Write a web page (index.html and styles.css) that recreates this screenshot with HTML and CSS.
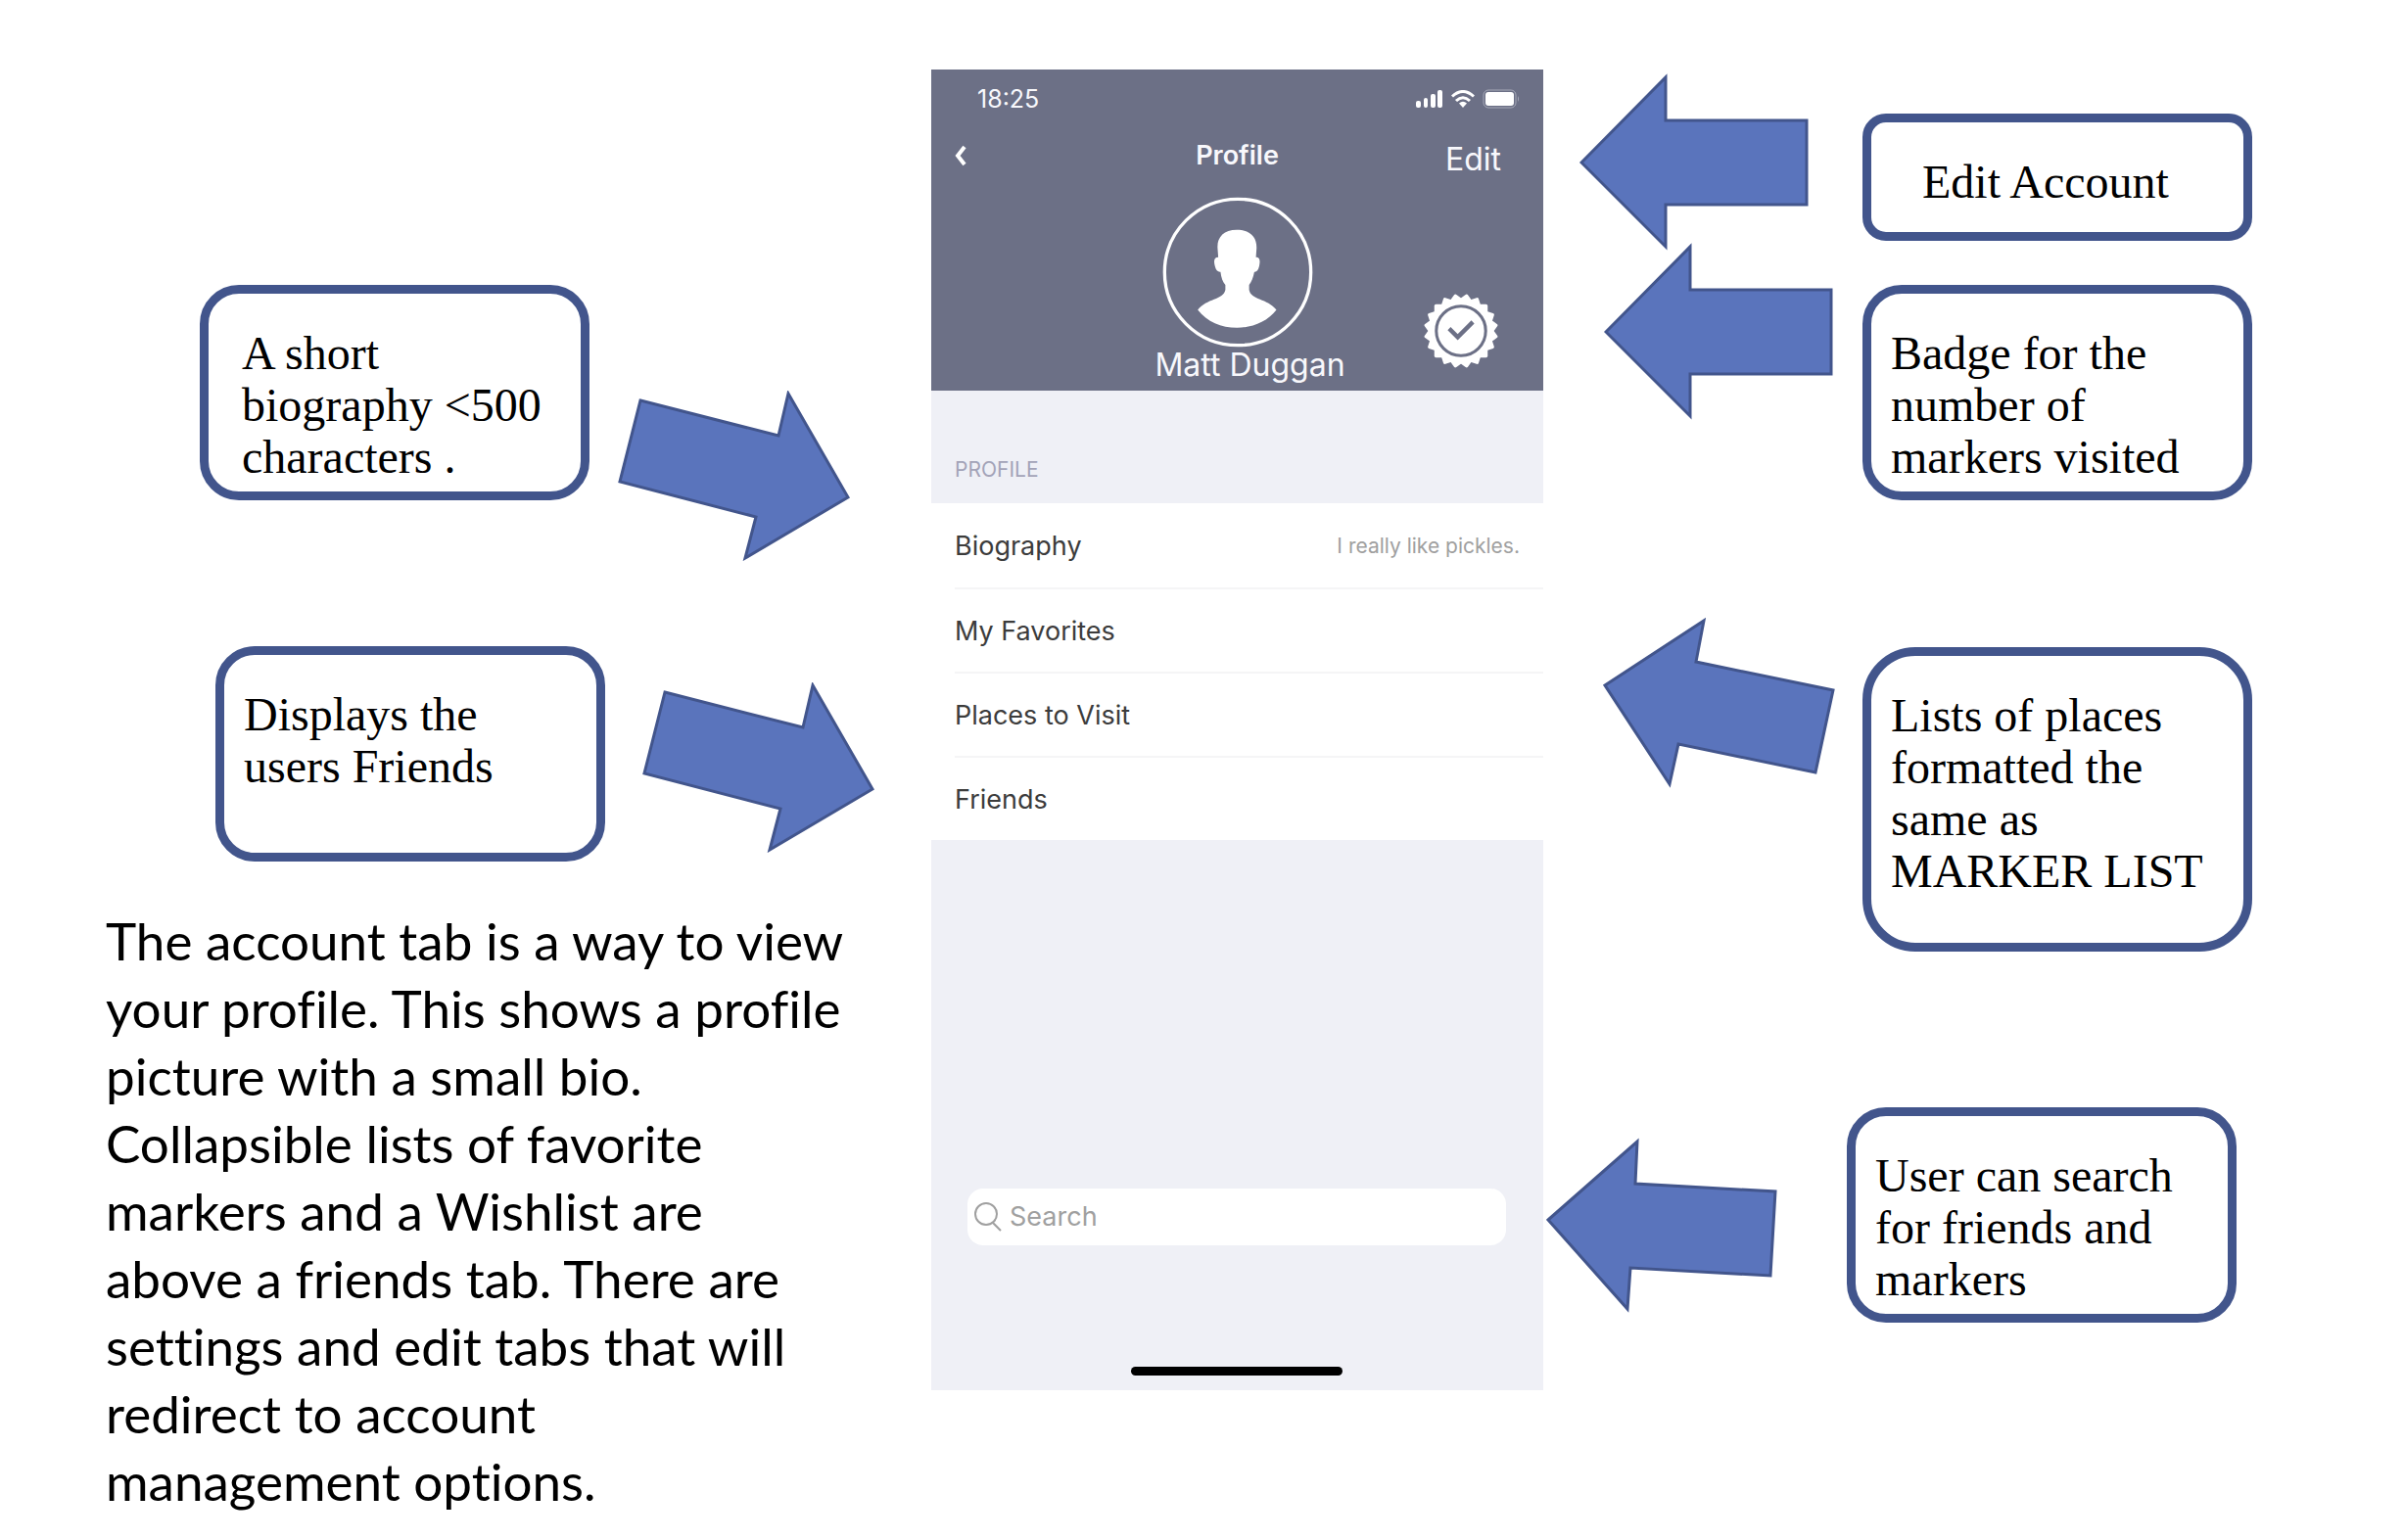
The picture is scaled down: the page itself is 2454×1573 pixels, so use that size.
FILE: index.html
```html
<!DOCTYPE html>
<html lang="en">
<head>
<meta charset="utf-8">
<meta name="viewport" content="width=device-width, initial-scale=1">
<title>Profile screen</title>
<link rel="stylesheet" href="styles.css">
</head>
<body>
<main class="slide">
  <section class="notes notes-left">
    <div class="note note-bio">
      <p class="callout">A short<br>biography &lt;500<br>characters .</p>
      <svg class="arrow" viewBox="631 399 237 174" width="237" height="174" aria-hidden="true"><path d="M654 409 795 445 805 402 866 508 761 570 772 528 633 492Z"/></svg>
    </div>
    <div class="note note-friends">
      <p class="callout">Displays the<br>users Friends</p>
      <svg class="arrow" viewBox="631 399 237 174" width="237" height="174" aria-hidden="true"><path d="M654 409 795 445 805 402 866 508 761 570 772 528 633 492Z"/></svg>
    </div>
    <p class="summary">The account tab is a way to view<br>your profile. This shows a profile<br>picture with a small bio.<br>Collapsible lists of favorite<br>markers and a Wishlist are<br>above a friends tab. There are<br>settings and edit tabs that will<br>redirect to account<br>management options.</p>
  </section>

  <section class="phone" aria-label="Profile screen">
    <header class="phone-header">
      <div class="status">
        <span>18:25</span>
        <span class="status-icons">
          <svg viewBox="0 0 28 18" width="28" height="18" aria-hidden="true"><rect x="0" y="11" width="5" height="7" rx="2"/><rect x="8" y="8" width="4" height="10" rx="2"/><rect x="15" y="4" width="5" height="14" rx="2"/><rect x="22" y="0" width="5" height="18" rx="2"/></svg>
          <svg viewBox="0 0 24 18" width="24" height="18" aria-hidden="true"><path class="wifi-arc" d="M1 6.500Q12-3.500 23 6.500M5 11Q12 4.500 19 11"/><path d="M8 13.500Q12 10 16 13.500L12 18Z"/></svg>
          <svg viewBox="0 0 38 20" width="38" height="20" aria-hidden="true"><rect class="battery-case" x="1" y="1" width="33" height="18" rx="5"/><rect x="3" y="3" width="29" height="14" rx="3"/><path class="battery-tip" d="M36 7Q38 10 36 13Z"/></svg>
        </span>
      </div>
      <nav class="navbar">
        <button class="back" type="button" aria-label="Back"><svg viewBox="0 0 12 22" width="12" height="22" aria-hidden="true"><path d="M10 2 3 11 10 20"/></svg></button>
        <h1>Profile</h1>
        <button class="edit" type="button">Edit</button>
      </nav>
      <div class="identity">
        <svg class="avatar" viewBox="78 32 464 464" width="154" height="154" aria-hidden="true"><circle cx="310" cy="264" r="225"/><path d="M307 134C350 134 369 158 368 190L366 218C380 218 379 232 376 246C373 259 368 264 361 263C358 280 352 294 345 303V318C350 350 402 344 429 380C400 417 355 435 308 435C259 435 216 417 187 380C214 344 266 350 272 318V303C264 294 259 280 257 263C249 264 243 259 240 246C236 232 236 218 250 218L248 190C246 158 266 134 307 134Z"/></svg>
        <p class="name">Matt Duggan</p>
        <svg class="badge" viewBox="-113 -113 226 226" width="76" height="76" role="img" aria-label="Markers visited badge">
          <rect x="-81" y="-81" width="162" height="162" rx="5"/>
          <rect x="-81" y="-81" width="162" height="162" rx="5" transform="rotate(18)"/>
          <rect x="-81" y="-81" width="162" height="162" rx="5" transform="rotate(36)"/>
          <rect x="-81" y="-81" width="162" height="162" rx="5" transform="rotate(54)"/>
          <rect x="-81" y="-81" width="162" height="162" rx="5" transform="rotate(72)"/>
          <circle r="75"/>
          <path d="M-36-7-10 19 36-27"/>
        </svg>
      </div>
    </header>

    <h2>PROFILE</h2>
    <ul class="rows">
      <li><span>Biography</span><span class="value">I really like pickles.</span></li>
      <li><span>My Favorites</span></li>
      <li><span>Places to Visit</span></li>
      <li><span>Friends</span></li>
    </ul>

    <footer class="phone-footer">
      <label class="search">
        <svg viewBox="0 0 28 32" width="28" height="32" aria-hidden="true"><circle cx="12" cy="13" r="11"/><path d="M19 22 27 30"/></svg>
        <input type="search" placeholder="Search" aria-label="Search">
      </label>
      <div class="home-bar"></div>
    </footer>
  </section>

  <section class="notes notes-right">
    <div class="note note-edit">
      <svg class="arrow" viewBox="1613 75 234 182" width="234" height="182" aria-hidden="true"><path d="M1615 166 1701 79V123H1845V209H1701V252Z"/></svg>
      <p class="callout">Edit Account</p>
    </div>
    <div class="note note-badge">
      <svg class="arrow" viewBox="1613 75 234 182" width="234" height="182" aria-hidden="true"><path d="M1615 166 1701 79V123H1845V209H1701V252Z"/></svg>
      <p class="callout">Badge for the<br>number of<br>markers visited</p>
    </div>
    <div class="note note-lists">
      <svg class="arrow" viewBox="1637 630 237 176" width="237" height="176" aria-hidden="true"><path d="M1639 700 1740 634 1732 676 1872 705 1854 789 1714 760 1705 801Z"/></svg>
      <p class="callout">Lists of places<br>formatted the<br>same as<br>MARKER LIST</p>
    </div>
    <div class="note note-search">
      <svg class="arrow" viewBox="1579 1161 237 180" width="237" height="180" aria-hidden="true"><path d="M1581 1246 1672 1166 1670 1209 1813 1217 1808 1303 1665 1295 1662 1337Z"/></svg>
      <p class="callout">User can search<br>for friends and<br>markers</p>
    </div>
  </section>
</main>
</body>
</html>
```

FILE: styles.css
```css
* { box-sizing: border-box; }

body {
  margin: 0;
  background: #fff;
  color: #000;
  font-family: Inter, "Liberation Sans", sans-serif;
}

h1, h2, p, ul { margin: 0; padding: 0; }

button {
  padding: 0;
  border: 0;
  background: none;
  color: inherit;
  font: inherit;
  cursor: pointer;
}

.slide {
  display: grid;
  grid-template-columns: minmax(0, 951fr) 625px minmax(0, 878fr);
  align-items: start;
}

/* Notes */
.note {
  display: flex;
  align-items: flex-start;
}

.callout {
  flex: none;
  width: 398px;
  min-height: 220px;
  padding: 34px 16px 9px 20px;
  border: 9px solid #42558c;
  border-radius: 40px;
  font: 48px/53px "Liberation Serif", serif;
  white-space: nowrap;
}

.arrow {
  flex: none;
  fill: #5a74bc;
  stroke: #42558c;
  stroke-width: 3;
}

.notes-left { padding: 291px 0 0 108px; }

.note-bio { gap: 29px; padding-left: 96px; }
.note-bio .callout { padding-left: 34px; }
.note-bio .arrow { margin-top: 108px; }

.note-friends { gap: 38px; margin-top: 87px; padding-left: 112px; }
.note-friends .arrow { margin-top: 37px; }

.summary {
  margin-top: 46px;
  font: 53px/69px Lato, sans-serif;
  font-variant-ligatures: none;
  white-space: nowrap;
}

.notes-right { padding: 75px 154px 0 0; }
.notes-right .note { justify-content: flex-end; }

.note-edit { gap: 55px; }
.note-edit .callout {
  min-height: 130px;
  margin-top: 41px;
  padding-left: 52px;
  border-radius: 24px;
}

.note-badge { gap: 30px; margin-top: -9px; }
.note-badge .callout { margin-top: 43px; }

.note-lists { gap: 28px; margin-top: 119px; }
.note-lists .callout {
  min-height: 311px;
  margin-top: 31px;
  border-radius: 54px;
}

.note-search { gap: 70px; margin-top: 159px; padding-right: 16px; }
.note-search .arrow { margin-top: 30px; }

/* Phone */
.phone {
  margin-top: 71px;
  background: #eff0f6;
}

.phone-header {
  height: 328px;
  background: #6c7086;
  color: #f8f8fc;
}

.status {
  display: flex;
  justify-content: space-between;
  align-items: center;
  padding: 15px 24px 0 47px;
  font-size: 25px;
  line-height: 30px;
}

.status-icons {
  display: flex;
  align-items: center;
  gap: 8px;
  fill: #fff;
}

.wifi-arc { fill: none; stroke: #fff; stroke-width: 3; }
.battery-case { fill: none; stroke: #a6a9b8; stroke-width: 1; }
.battery-tip { fill: #a6a9b8; }

.navbar {
  display: grid;
  grid-template-columns: 1fr auto 1fr;
  align-items: center;
  height: 64px;
  padding: 0 43px 0 24px;
  margin-top: 15px;
}

.navbar h1 {
  margin-left: 19px;
  font-size: 27px;
  font-weight: 600;
  line-height: 32px;
  padding-bottom: 8px;
}

.back {
  justify-self: start;
  display: flex;
  padding-bottom: 8px;
}

.back path { fill: none; stroke: #fff; stroke-width: 4; }

.edit { justify-self: end; font-size: 32px; line-height: 40px; }

.identity {
  position: relative;
  display: flex;
  flex-direction: column;
  align-items: center;
  padding-top: 6px;
}

.avatar { fill: #fff; }
.avatar circle { fill: none; stroke: #fff; stroke-width: 10; }

.name {
  padding-left: 26px;
  font-size: 32px;
  line-height: 36px;
}

.badge {
  position: absolute;
  right: 46px;
  top: 105px;
  fill: #fff;
}

.badge circle { fill: none; stroke: #6c7086; stroke-width: 9; }
.badge path { fill: none; stroke: #6c7086; stroke-width: 13; }

.phone h2 {
  padding: 68px 24px 21px;
  color: #a3a3b8;
  font-size: 21px;
  font-weight: 400;
  line-height: 26px;
}

.rows {
  padding-left: 24px;
  background: #fff;
  color: #3c3c3c;
  font-size: 27px;
  list-style: none;
}

.rows li {
  display: flex;
  justify-content: space-between;
  align-items: center;
  height: 86px;
  padding-right: 24px;
}

.rows li + li { border-top: 2px solid #f5f5f6; }

.value { color: #a0a0a0; font-size: 21px; }

.phone-footer { padding: 356px 38px 15px 37px; }

.search {
  display: flex;
  align-items: center;
  gap: 8px;
  height: 58px;
  padding: 0 7px;
  border-radius: 16px;
  background: #fff;
}

.search svg { flex: none; fill: none; stroke: #a0a0a0; stroke-width: 2; }

.search input {
  flex: 1;
  min-width: 0;
  padding: 0;
  border: 0;
  outline: 0;
  background: none;
  color: #3c3c3c;
  font: 27px/32px Inter, "Liberation Sans", sans-serif;
}

.search input::placeholder { color: #a0a0a0; opacity: 1; }

.home-bar {
  width: 216px;
  height: 9px;
  margin: 124px auto 0;
  border-radius: 5px;
  background: #000;
}
```
